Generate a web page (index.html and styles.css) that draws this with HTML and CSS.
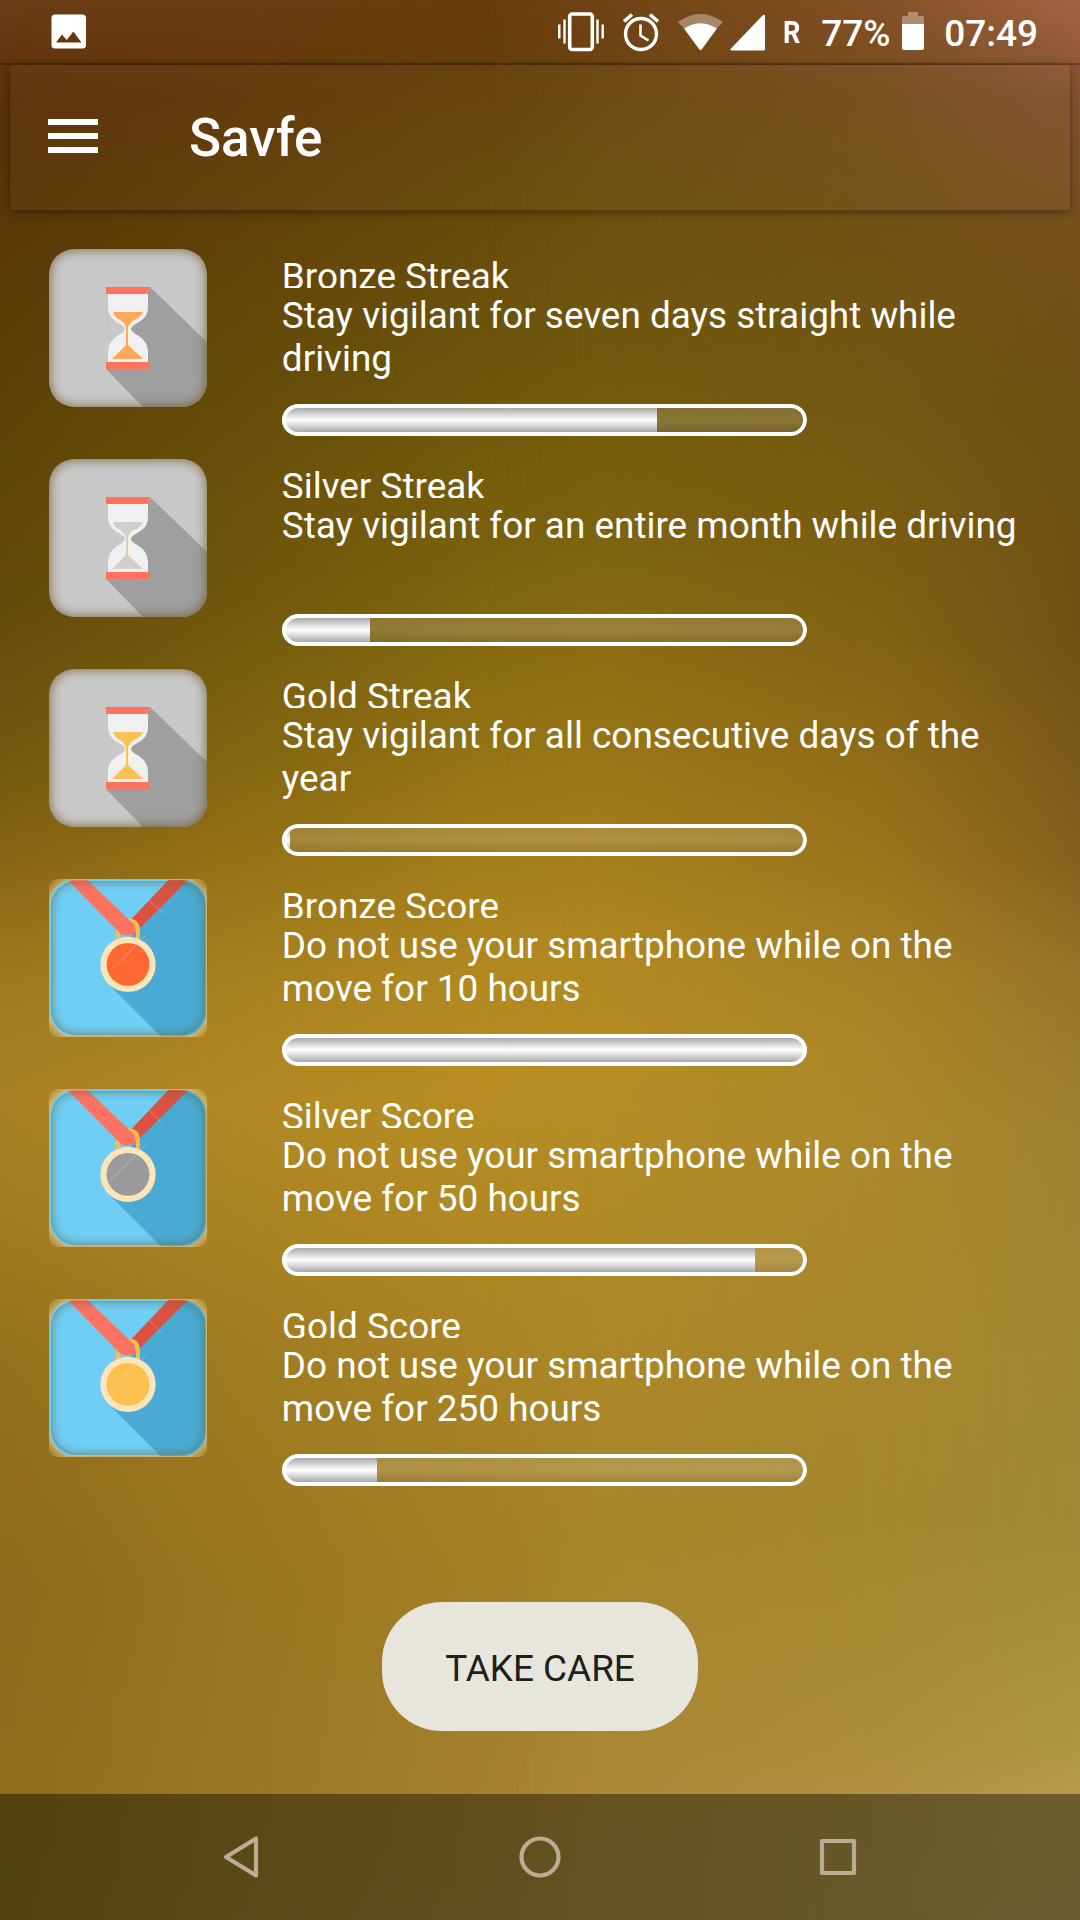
FILE: index.html
```html
<!DOCTYPE html>
<html lang="en">
<head>
  <meta charset="UTF-8">
  <title>Savfe</title>
  <link rel="stylesheet" href="styles.css">
</head>
<body>

<div class="screen">

  <!-- Status bar -->
  <div class="status-bar">
    <svg class="picture-icon" width="36" height="36" viewBox="0 0 36 36">
      <path fill="#fff" fill-rule="evenodd" d="M4 0.5H31.500Q35 .5 35 4V31Q35 34.500 31.500 34.500H4Q.5 34.500 .5 31V4Q.5 .5 4 .5ZM5 28.500H30.500L22.300 17.500 15.700 26 11 20.500Z"/>
    </svg>
    <div class="status-icons">
      <svg width="46" height="40" viewBox="0 0 46 40" fill="none" stroke="#fff">
        <rect x="11.700" y="2" width="22.600" height="35.500" rx="2.500" stroke-width="3.600"/>
        <path stroke-width="2.400" d="M1.300 12.500v14M6.500 7.500v24M39.500 7.500v24M44.700 12.500v14"/>
      </svg>
      <svg class="alarm" width="38" height="40" viewBox="0 0 38 40" fill="none" stroke="#fff">
        <circle cx="19" cy="22" r="15.500" stroke-width="3.400"/>
        <path stroke-width="3.600" d="M2 9.500l8-7M36 9.500l-8-7"/>
        <path stroke-width="2.600" d="M18.500 12.500v11l8 5"/>
      </svg>
      <svg class="wifi" width="45" height="38" viewBox="0 0 45 38">
        <path fill="#fff" opacity=".35" d="M0 9Q22.500-7 45 9L39 15.500Q22.500 5 6 15.500Z"/>
        <path fill="#fff" d="M6 15.500Q22.500 5 39 15.500L24 36Q22.500 38 21 36Z"/>
      </svg>
      <svg class="signal" width="36" height="38" viewBox="0 0 36 38">
        <path fill="#fff" d="M35 3.500V36Q35 37.500 33.500 37.500H1.500Q-.5 37 1 35.500L32 3Q35 .5 35 3.500Z"/>
      </svg>
      <span class="roaming">R</span>
      <span class="battery-text">77%</span>
      <svg class="battery" width="22" height="39" viewBox="0 0 22 39">
        <path fill="#fff" opacity=".35" d="M6 0h10v4h4q2 0 2 2v6H0V6q0-2 2-2h4z"/>
        <path fill="#fff" d="M0 12h22v24q0 2-2 2H2q-2 0-2-2z"/>
      </svg>
      <span class="clock">07:49</span>
    </div>
  </div>

  <!-- Toolbar -->
  <div class="toolbar">
    <div class="menu-btn"><span></span><span></span><span></span></div>
    <h1>Savfe</h1>
  </div>

  <!-- Achievements are filled in by the script -->
  <div class="achievements" id="achievements"></div>

  <div class="button-row">
    <button class="care-btn">TAKE CARE</button>
  </div>

  <!-- Navigation bar -->
  <div class="nav-bar">
    <svg viewBox="0 0 1080 126" width="1080" height="126" fill="none" stroke="#b9ae95" stroke-width="4.200" stroke-linejoin="round">
      <path d="M256 44.500V81.500L226 63Z"/>
      <circle cx="540" cy="63" r="18.500"/>
      <rect x="822" y="47" width="32" height="32"/>
    </svg>
  </div>
</div>

<script>
const achievements = [
  { type: 'streak', color: '#ffa85a', title: 'Bronze Streak', text: 'Stay vigilant for seven days straight while driving', progress: 71.43 },
  { type: 'streak', color: '#cfcfcb', title: 'Silver Streak', text: 'Stay vigilant for an entire month while driving', progress: 16.7 },
  { type: 'streak', color: '#fbc052', title: 'Gold Streak', text: 'Stay vigilant for all consecutive days of the year', progress: 1.5 },
  { type: 'score', color: '#ff6830', title: 'Bronze Score', text: 'Do not use your smartphone while on the move for 10 hours', progress: 100 },
  { type: 'score', color: '#9b9b9b', title: 'Silver Score', text: 'Do not use your smartphone while on the move for 50 hours', progress: 90.1 },
  { type: 'score', color: '#fdc04f', title: 'Gold Score', text: 'Do not use your smartphone while on the move for 250 hours', progress: 18.1 }
];

function hourglass(color) {
  return `
    <svg viewBox="0 0 158 158">
      <path fill="#9f9f9f" d="M101 38L158 93V158H94L57 120Z"/>
      <path fill="#f0f0f0" d="M59 44h40v14q0 10-9 15-8 4-8 7t8 7q9 6 9 16v11H59v-11q0-10 9-16 8-4 8-7t-8-7q-9-5-9-15z"/>
      <path fill="#fff0cc" d="M63 62h32q-4 8-10 10-5 3-5 7v16l16 15H62l15-15V79q0-4-5-7-7-3-9-10z"/>
      <path fill="${color}" d="M64 63h30q-3 6-9 8-5 3-6 8v17l15 14H63l14-14V79q-1-5-6-8-5-2-7-8z"/>
      <path fill="#fd7360" d="M57 38h44v7H57zM57 113h44v7H57z"/>
      <path stroke="#fff" stroke-opacity=".35" stroke-width=".8" d="M62 79l40-40M149 71l8 8"/>
    </svg>`;
}

function medal(color) {
  return `
    <svg viewBox="0 0 158 158">
      <path fill="#70cdf4" d="M0 0H158V158H0Z"/>
      <path fill="#4aaad3" d="M79 60L138 0H158V158H112L60 106Z"/>
      <path fill="#db5240" d="M120 0h20L90 50 80 42z"/>
      <path fill="none" stroke="#fdbb50" stroke-width="4" d="M69 62V51q0-10 10-10t10 10v11"/>
      <path fill="#fc7362" d="M18 0h20L82 42q6 5 4 12-7 4-14 1z"/>
      <circle cx="79" cy="85.500" r="28" fill="#fce5ba"/>
      <circle cx="79" cy="85.500" r="21.700" fill="${color}"/>
      <path stroke="#fff" stroke-opacity=".3" stroke-width=".8" d="M62 91l36-36M100 20l15 15"/>
    </svg>`;
}

document.getElementById('achievements').innerHTML = achievements.map(item => `
  <div class="achievement">
    <div class="badge ${item.type}">${item.type === 'streak' ? hourglass(item.color) : medal(item.color)}</div>
    <div class="details">
      <h2>${item.title}</h2>
      <p>${item.text}</p>
      <div class="progress"><div class="progress-fill" style="width: ${item.progress}%"></div></div>
    </div>
  </div>
`).join('');
</script>

</body>
</html>
```

FILE: styles.css
```css
* {
  box-sizing: border-box;
}
body {
  margin: 0;
  font-family: Roboto, sans-serif;
  color: #fff;
}
.screen {
  position: relative;
  display: flex;
  flex-direction: column;
  width: 1080px;
  height: 1920px;
  overflow: hidden;
  isolation: isolate;
  /* middle column of the backdrop */
  background: linear-gradient(174deg, #6c3a0f 0, #673f0c 100px, #6a4c0c 220px, #70590c 400px, #80670f 600px, #a37e18 850px, #b58c20 1000px, #bb9123 1130px, #b08926 1350px, #a88529 1600px, #a98531 1800px, #a98639 1960px);
}
/* left and right edges of the backdrop fade into the middle */
.screen::before,
.screen::after {
  content: "";
  position: absolute;
  inset: 0;
  z-index: -1;
}
.screen::before {
  background: linear-gradient(#6b3d16 0, #5b3209 100px, #5a3707 220px, #5c4207 400px, #624a0a 600px, #73590f 760px, #876414 857px, #9e7920 980px, #a98124 1100px, #a07b20 1225px, #93711c 1350px, #8c6919 1590px, #8e6e1c 1920px);
  mask-image: linear-gradient(to right, #000, rgba(0, 0, 0, 0.6) 20%, transparent 55%);
}
.screen::after {
  background: linear-gradient(#a36343 0, #845330 100px, #79501f 220px, #6e5014 400px, #725214 640px, #84601c 860px, #957328 970px, #a08230 1130px, #a28632 1300px, #a08834 1520px, #b09640 1740px, #b99c4e 1800px, #b89c58 1920px);
  mask-image: linear-gradient(to left, #000, rgba(0, 0, 0, 0.5) 18%, transparent 55%);
}

/* Status bar */
.status-bar {
  display: flex;
  justify-content: space-between;
  align-items: flex-start;
  height: 65px;
  padding: 0 42px 0 51px;
  border-bottom: 2px solid rgba(0, 0, 0, 0.25);
}
.picture-icon {
  margin-top: 14px;
}
.status-icons {
  display: flex;
  align-items: flex-start;
  padding-top: 12px;
  line-height: 43px;
  font-weight: 500;
}
.alarm {
  margin-left: 18px;
}
.wifi {
  margin: 1px 0 0 18px;
}
.signal {
  margin: 1px 0 0 7px;
}
.roaming {
  width: 38px;
  margin-left: 17px;
  font-size: 32px;
  font-weight: 700;
  line-height: 41px;
  transform: scaleX(0.85);
  transform-origin: left;
}
.battery-text {
  width: 81px;
  font-size: 37px;
}
.battery {
  margin-right: 20px;
}
.clock {
  font-size: 37px;
}

/* Toolbar */
.toolbar {
  display: flex;
  align-items: center;
  height: 145px;
  margin: 0 10px;
  padding-left: 38px;
  background: rgba(255, 255, 255, 0.02);
  box-shadow: 0 2px 9px rgba(0, 0, 0, 0.4);
}
.menu-btn {
  display: flex;
  flex-direction: column;
  gap: 8.500px;
  width: 50px;
  margin-bottom: 3px;
}
.menu-btn span {
  height: 5.600px;
  background: #fff;
}
.toolbar h1 {
  margin: 1px 0 0 91px;
  font-size: 53px;
  font-weight: 500;
}

/* Achievements */
.achievements {
  padding: 39px 49px 0;
}
.achievement {
  display: flex;
  gap: 75px;
  height: 210px;
}
.badge {
  position: relative;
  width: 158px;
  height: 158px;
  overflow: hidden;
}
.badge svg {
  display: block;
  width: 158px;
  height: 158px;
  border-radius: 25px;
}
.badge.streak {
  border-radius: 25px;
}
.badge.streak svg {
  background: #c8c8c8;
}
.badge.score {
  border-radius: 8px;
  background: radial-gradient(circle, rgba(255, 235, 190, 0.55) 98px, rgba(255, 235, 190, 0.05) 110px);
}
.badge.score svg {
  border: 1.500px solid #c9b078;
}
/* soft inner edge over the drawing */
.badge::after {
  content: "";
  position: absolute;
  inset: 0;
  border-radius: 25px;
  box-shadow: inset 0 0 12px rgba(105, 80, 30, 0.85);
}
.badge.score::after {
  inset: 2px;
  box-shadow: inset 0 0 10px rgba(95, 110, 70, 0.85);
}
.details {
  width: 750px;
}
.details h2 {
  height: 37px;
  margin: 2px 0 0;
  overflow: hidden;
  font-size: 36.900px;
  font-weight: 400;
  line-height: 51px;
}
.details p {
  height: 86px;
  margin: 6px 0 0;
  font-size: 36.900px;
  line-height: 43px;
}
.progress {
  position: relative;
  width: 525px;
  height: 32px;
  margin-top: 24px;
  overflow: hidden;
  border-radius: 16px;
  background: linear-gradient(rgba(190, 190, 190, 0.2), rgba(255, 255, 255, 0.16) 50%, rgba(110, 110, 110, 0.25));
}
.progress-fill {
  height: 32px;
  background: linear-gradient(#aaa 4px, #fff 16px, #aaa 28px);
}
.progress::after {
  content: "";
  position: absolute;
  inset: 0;
  border: 4px solid #fff;
  border-radius: 16px;
}

/* Button */
.button-row {
  display: flex;
  justify-content: center;
  padding-top: 93px;
}
.care-btn {
  width: 316px;
  height: 129px;
  padding: 4px 0 0;
  border: none;
  border-radius: 60px;
  background: #e8e5dc;
  color: #1e1e1b;
  font-family: inherit;
  font-size: 36.900px;
  cursor: pointer;
}

/* Navigation bar */
.nav-bar {
  height: 126px;
  margin-top: auto;
  background: rgba(0, 0, 0, 0.4);
}
```
